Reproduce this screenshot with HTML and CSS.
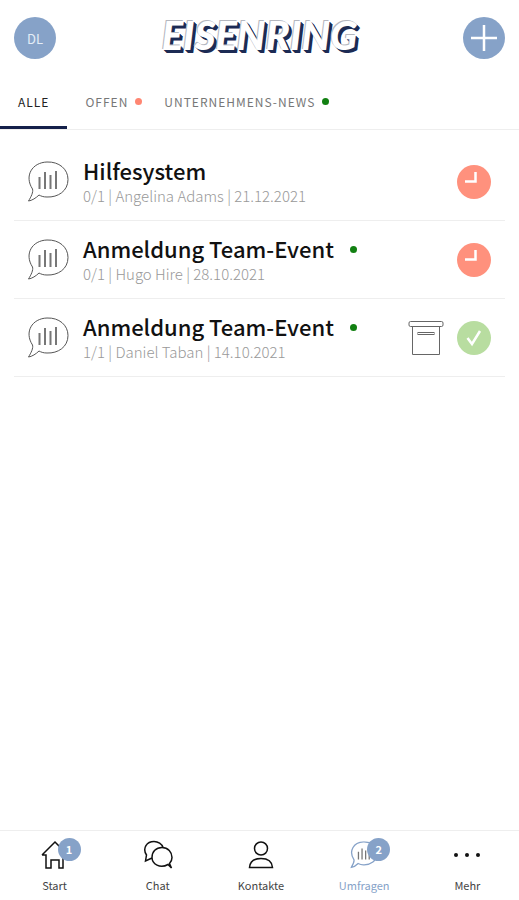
FILE: index.html
```html
<!DOCTYPE html>
<html lang="de">
<head>
    <meta charset="UTF-8">
    <meta name="viewport" content="width=device-width, initial-scale=1.0">
    <title>Umfragen</title>
    <link rel="stylesheet" href="styles.css">
</head>
<body>
    <svg class="symbols" aria-hidden="true">
        <symbol id="icon-survey" viewBox="0 0 42 42">
            <path d="M5.500 28C-3 15 5 1.500 20 1C32 0.500 41 8 41 18.500C41 30 31 36.500 20 36C16 36 14 35 12 34C9 37 5 39.500 1.500 40C4 36 6.500 31 5.500 28Z" fill="none" stroke="currentColor"/>
            <path class="bars" d="M12.500 16v12M18 11v17M23.500 14v14M29 10v18" fill="none"/>
        </symbol>
        <symbol id="icon-clock" viewBox="0 0 34 34">
            <path d="M18.500 7v9.500H8" fill="none" stroke="currentColor" stroke-width="2.500"/>
        </symbol>
    </svg>

    <header class="header">
        <button class="round-btn avatar" type="button">DL</button>
        <h1 class="logo">EISENRING</h1>
        <button class="round-btn" type="button" aria-label="Neu">
            <svg width="28" height="28" viewBox="0 0 28 28"><path d="M14 1v26M1 14h26" stroke="currentColor" stroke-width="2.500"/></svg>
        </button>
    </header>

    <nav class="tabs">
        <a class="tab active" href="#alle">ALLE</a>
        <a class="tab" href="#offen">OFFEN <span class="dot dot-open"></span></a>
        <a class="tab" href="#news">UNTERNEHMENS-NEWS <span class="dot"></span></a>
    </nav>

    <main class="list">
        <article class="item">
            <svg class="item-icon"><use href="#icon-survey"/></svg>
            <div class="item-text">
                <h2>Hilfesystem</h2>
                <p>0/1 | Angelina Adams | 21.12.2021</p>
            </div>
            <span class="status status-open"><svg><use href="#icon-clock"/></svg></span>
        </article>
        <article class="item">
            <svg class="item-icon"><use href="#icon-survey"/></svg>
            <div class="item-text">
                <h2>Anmeldung Team-Event <span class="dot"></span></h2>
                <p>0/1 | Hugo Hire | 28.10.2021</p>
            </div>
            <span class="status status-open"><svg><use href="#icon-clock"/></svg></span>
        </article>
        <article class="item">
            <svg class="item-icon"><use href="#icon-survey"/></svg>
            <div class="item-text">
                <h2>Anmeldung Team-Event <span class="dot"></span></h2>
                <p>1/1 | Daniel Taban | 14.10.2021</p>
            </div>
            <button class="archive-btn" type="button" aria-label="Archivieren">
                <svg width="36" height="34" viewBox="0 0 36 34" fill="none" stroke="#666">
                    <rect x="1" y="0.500" width="34" height="5" rx="1.500"/>
                    <path d="M4.500 5.500v28h27v-28"/>
                    <rect x="10" y="11.500" width="16" height="2"/>
                </svg>
            </button>
            <span class="status status-done">
                <svg viewBox="0 0 34 34"><path d="M10.500 17l4.500 6l8-13" fill="none" stroke="currentColor" stroke-width="2.500"/></svg>
            </span>
        </article>
    </main>

    <nav class="bottom-nav">
        <a href="#start">
            <span class="nav-icon">
                <svg viewBox="0 0 30 30"><path d="M2 15L15 2l13 13M2 15h4v13h5v-8h8v8h4V15h5" /></svg>
                <span class="badge">1</span>
            </span>
            Start
        </a>
        <a href="#chat">
            <span class="nav-icon">
                <svg viewBox="0 0 30 30">
                    <path d="M9 18L2.500 21L3.500 15C-1 8 4 1.500 11 1.500C15 1.500 19 4 20 7.500"/>
                    <path d="M25 24.500C17 29 9 24 9 17.500C9 11.500 13 7.500 19 7.500C25 7.500 29 12 29 17.500C29 20 28 22 26.500 23.500L28.500 28Z"/>
                </svg>
            </span>
            Chat
        </a>
        <a href="#kontakte">
            <span class="nav-icon">
                <svg viewBox="0 0 30 30"><circle cx="15" cy="8.500" r="6.500"/><path d="M3.500 27.500C4 21 9 18.500 15 18.500C21 18.500 26 21 26.500 27.500Z"/></svg>
            </span>
            Kontakte
        </a>
        <a class="active" href="#umfragen">
            <span class="nav-icon">
                <svg viewBox="0 0 46 46" class="survey-small"><use href="#icon-survey" x="2" y="2" width="42" height="42"/></svg>
                <span class="badge">2</span>
            </span>
            Umfragen
        </a>
        <a href="#mehr">
            <span class="nav-icon">
                <svg viewBox="0 0 30 30" class="more"><circle cx="4" cy="15" r="2"/><circle cx="15" cy="15" r="2"/><circle cx="26" cy="15" r="2"/></svg>
            </span>
            Mehr
        </a>
    </nav>
</body>
</html>
```
FILE: styles.css
```css
* {
    margin: 0;
    padding: 0;
    box-sizing: border-box;
}

body {
    font-family: "Noto Sans CJK SC", "Noto Sans", sans-serif;
    background: #fff;
    color: #111;
    min-height: 100vh;
    display: flex;
    flex-direction: column;
}

a {
    color: inherit;
    text-decoration: none;
}

button {
    border: none;
    background: none;
    font: inherit;
    cursor: pointer;
}

.symbols {
    display: none;
}

.header {
    display: flex;
    justify-content: space-between;
    align-items: center;
    height: 76px;
    padding: 0 14px;
}

.round-btn {
    display: flex;
    align-items: center;
    justify-content: center;
    width: 42px;
    height: 42px;
    border-radius: 50%;
    background: #86a2c8;
    color: #fff;
}

.avatar {
    font-size: 13px;
    color: #e4edf7;
}

.logo {
    font-family: Lato, sans-serif;
    font-size: 40px;
    font-style: italic;
    font-weight: 900;
    line-height: 42px;
    padding-bottom: 6px;
    color: #fff;
    -webkit-text-stroke: 3px #fff;
    paint-order: stroke fill;
    text-shadow: -1px -1px 0 #b4b7bf, 1px 1px 0 #1c2b54, 2px 2px 0 #1c2b54, 3px 3px 0 #1c2b54;
}

.tabs {
    display: flex;
    height: 54px;
    border-bottom: 1px solid #eee;
}

.tab {
    display: flex;
    align-items: center;
    gap: 7px;
    padding: 0 18px;
    font-size: 12px;
    letter-spacing: 1px;
    color: #777;
    border-bottom: 3px solid transparent;
}

.tab.active {
    color: #222;
    border-color: #14204a;
}

.dot {
    display: inline-block;
    width: 7px;
    height: 7px;
    border-radius: 50%;
    background: #128012;
}

/* the dot sits inside the tab's right padding */
.tab .dot {
    margin-right: -14px;
}

.dot-open {
    background: #ff8672;
}

.list {
    flex: 1;
    padding: 13px 14px 0;
}

.item {
    display: flex;
    align-items: center;
    height: 78px;
    padding: 0 14px 0 13px;
    border-bottom: 1px solid #eee;
}

.item-icon {
    width: 42px;
    height: 42px;
    margin-right: 14px;
    color: #555;
}

.bars {
    stroke: #777;
    stroke-width: 2px;
}

.item-text {
    flex: 1;
}

.item h2 {
    display: flex;
    align-items: center;
    gap: 16px;
    font-size: 22px;
    font-weight: 500;
    line-height: 28px;
}

.item .dot {
    margin-top: 4px;
}

.item p {
    font-size: 15px;
    font-weight: 300;
    line-height: 24px;
    color: #999;
}

.status {
    width: 34px;
    height: 34px;
    border-radius: 50%;
    color: #fff;
}

.status svg {
    display: block;
    width: 34px;
    height: 34px;
}

.status-open {
    background: #ff917d;
}

.status-done {
    background: #b8dda0;
}

.archive-btn {
    display: flex;
    margin-right: 13px;
}

.bottom-nav {
    display: grid;
    grid-template-columns: repeat(5, 1fr);
    height: 70px;
    padding-left: 3px;
    border-top: 1px solid #eee;
}

.bottom-nav a {
    display: flex;
    flex-direction: column;
    align-items: center;
    padding-top: 9px;
    font-size: 11px;
    line-height: 30px;
    color: #444;
}

.bottom-nav a.active {
    color: #86a2c8;
}

.nav-icon {
    position: relative;
    height: 30px;
}

.nav-icon svg {
    display: block;
    width: 30px;
    height: 30px;
    fill: none;
    stroke: #111;
    stroke-width: 1.5px;
}

.nav-icon .survey-small {
    stroke: #86a2c8;
    stroke-width: 2px;
}

.active .bars {
    stroke: #86a2c8;
}

.nav-icon .more {
    fill: #111;
    stroke: none;
}

.badge {
    position: absolute;
    top: -2px;
    left: 18px;
    width: 23px;
    height: 23px;
    border-radius: 50%;
    background: #86a2c8;
    color: #fff;
    font-size: 11px;
    font-weight: 700;
    line-height: 23px;
    text-align: center;
}
```
